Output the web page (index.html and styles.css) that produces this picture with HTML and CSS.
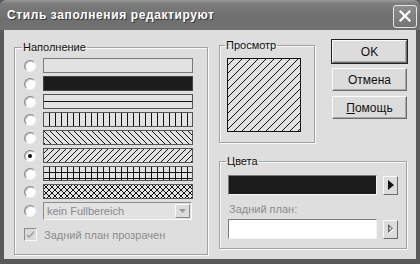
FILE: index.html
```html
<!DOCTYPE html>
<html lang="ru">
<head>
<meta charset="utf-8">
<link rel="stylesheet" href="styles.css">
</head>
<body>
<svg class="defs" width="0" height="0" aria-hidden="true">
  <defs>
    <pattern id="p-horz" width="8" height="7" patternUnits="userSpaceOnUse">
      <rect x="0" y="0" width="8" height="1" fill="#111"/>
    </pattern>
    <pattern id="p-vert" width="6" height="8" patternUnits="userSpaceOnUse">
      <rect x="0" y="0" width="1" height="8" fill="#111"/>
    </pattern>
    <pattern id="p-bdiag" width="6" height="6" patternUnits="userSpaceOnUse">
      <path d="M0 0h1v1H0zM1 1h1v1H1zM2 2h1v1H2zM3 3h1v1H3zM4 4h1v1H4zM5 5h1v1H5z" fill="#111"/>
    </pattern>
    <pattern id="p-fdiag" width="6" height="6" patternUnits="userSpaceOnUse">
      <path d="M5 0h1v1H5zM4 1h1v1H4zM3 2h1v1H3zM2 3h1v1H2zM1 4h1v1H1zM0 5h1v1H0z" fill="#111"/>
    </pattern>
    <pattern id="p-big" width="8" height="8" patternUnits="userSpaceOnUse">
      <path d="M7 0h1v1H7zM6 1h1v1H6zM5 2h1v1H5zM4 3h1v1H4zM3 4h1v1H3zM2 5h1v1H2zM1 6h1v1H1zM0 7h1v1H0z" fill="#111"/>
    </pattern>
    <pattern id="p-cross" width="6" height="6" patternUnits="userSpaceOnUse">
      <rect x="0" y="0" width="6" height="1" fill="#111"/>
      <rect x="0" y="0" width="1" height="6" fill="#111"/>
    </pattern>
    <pattern id="p-dcross" width="6" height="6" patternUnits="userSpaceOnUse">
      <path d="M0 0h1v1H0zM1 1h1v1H1zM2 2h1v1H2zM3 3h1v1H3zM4 4h1v1H4zM5 5h1v1H5zM5 0h1v1H5zM4 1h1v1H4zM3 2h1v1H3zM2 3h1v1H2zM1 4h1v1H1zM0 5h1v1H0z" fill="#111"/>
    </pattern>
  </defs>
</svg>

<div class="window">
  <div class="titlebar">
    <span class="title">Стиль заполнения редактируют</span>
    <span class="close">
      <svg width="22" height="21" viewBox="0 0 22 21">
        <path d="M6.5 5.5l9 9M15.5 5.5l-9 9" stroke="#fff" stroke-width="2.2" stroke-linecap="square"/>
      </svg>
    </span>
  </div>

  <div class="client">
    <fieldset class="group fill">
      <legend>Наполнение</legend>
      <div class="row"><span class="radio"></span><svg class="swatch" width="150" height="15"><rect x="0.5" y="0.5" width="149" height="14" fill="#e2e2e2" stroke="#7a7a7a"/></svg></div>
      <div class="row"><span class="radio"></span><svg class="swatch" width="150" height="15"><rect x="0.5" y="0.5" width="149" height="14" fill="#1c1c1c" stroke="#444"/></svg></div>
      <div class="row"><span class="radio"></span><svg class="swatch" width="150" height="15"><rect x="0.5" y="0.5" width="149" height="14" fill="#e2e2e2"/><rect x="0" y="0" width="150" height="15" fill="url(#p-horz)"/><rect x="0.5" y="0.5" width="149" height="14" fill="none" stroke="#555"/></svg></div>
      <div class="row"><span class="radio"></span><svg class="swatch" width="150" height="15"><rect x="0.5" y="0.5" width="149" height="14" fill="#e2e2e2"/><rect x="0" y="0" width="150" height="15" fill="url(#p-vert)"/><rect x="0.5" y="0.5" width="149" height="14" fill="none" stroke="#555"/></svg></div>
      <div class="row"><span class="radio"></span><svg class="swatch" width="150" height="15"><rect x="0.5" y="0.5" width="149" height="14" fill="#e2e2e2"/><rect x="0" y="0" width="150" height="15" fill="url(#p-bdiag)"/><rect x="0.5" y="0.5" width="149" height="14" fill="none" stroke="#555"/></svg></div>
      <div class="row"><span class="radio checked"></span><svg class="swatch" width="150" height="15"><rect x="0.5" y="0.5" width="149" height="14" fill="#e2e2e2"/><rect x="0" y="0" width="150" height="15" fill="url(#p-fdiag)"/><rect x="0.5" y="0.5" width="149" height="14" fill="none" stroke="#555"/></svg></div>
      <div class="row"><span class="radio"></span><svg class="swatch" width="150" height="15"><rect x="0.5" y="0.5" width="149" height="14" fill="#e2e2e2"/><rect x="0" y="0" width="150" height="15" fill="url(#p-cross)"/><rect x="0.5" y="0.5" width="149" height="14" fill="none" stroke="#555"/></svg></div>
      <div class="row"><span class="radio"></span><svg class="swatch" width="150" height="15"><rect x="0.5" y="0.5" width="149" height="14" fill="#e2e2e2"/><rect x="0" y="0" width="150" height="15" fill="url(#p-dcross)"/><rect x="0.5" y="0.5" width="149" height="14" fill="none" stroke="#555"/></svg></div>
      <div class="row combo-row">
        <span class="radio"></span>
        <div class="combo">
          <span class="combo-text">kein Fullbereich</span>
          <span class="combo-btn">
            <svg width="7" height="4" viewBox="0 0 7 4"><path d="M0 0h7L3.5 4z" fill="#9a9a9a"/></svg>
          </span>
        </div>
      </div>
      <div class="check-row">
        <span class="checkbox">
          <svg width="11" height="11" viewBox="0 0 11 11"><path d="M2 5l2 2 5-5v2l-5 5-2-2z" fill="#9a9a9a"/></svg>
        </span>
        <span class="muted">Задний план прозрачен</span>
      </div>
    </fieldset>

    <div class="side">
      <div class="side-top">
        <fieldset class="group preview">
          <legend>Просмотр</legend>
          <svg class="preview-box" width="74" height="74"><rect x="0.5" y="0.5" width="73" height="73" fill="#e2e2e2"/><rect x="0" y="0" width="74" height="74" fill="url(#p-big)"/><rect x="0.5" y="0.5" width="73" height="73" fill="none" stroke="#111"/></svg>
        </fieldset>
        <div class="buttons">
          <span class="btn default">OK</span>
          <span class="btn">Отмена</span>
          <span class="btn"><u>П</u>омощь</span>
        </div>
      </div>

      <fieldset class="group colors">
        <legend>Цвета</legend>
        <div class="color-row">
          <span class="well black"></span>
          <span class="arrow-btn">
            <svg width="6" height="10" viewBox="0 0 6 10"><path d="M0 0l6 5-6 5z" fill="#111"/></svg>
          </span>
        </div>
        <div class="muted bg-label">Задний план:</div>
        <div class="color-row">
          <span class="well white"></span>
          <span class="arrow-btn">
            <svg width="8" height="11" viewBox="0 0 8 11"><path d="M2 1l5 4.5-5 4.5z" fill="#fff"/><path d="M1 0l5 4.5L1 9z" fill="#5e5e5e"/><path d="M2.5 2.5l2 2-2 2z" fill="#fff"/></svg>
          </span>
        </div>
      </fieldset>
    </div>
  </div>
</div>
</body>
</html>
```

FILE: styles.css
```css
body {
    margin: 0;
    font: 11px "Liberation Sans", Arial, sans-serif;
    color: #111;
}

.defs {
    position: absolute;
}

.window {
    width: 420px;
    height: 264px;
    background: #5a5a5a;
    display: flex;
    flex-direction: column;
}

.titlebar {
    height: 30px;
    flex: none;
    display: flex;
    align-items: center;
    padding: 0 3px 0 7px;
    background: linear-gradient(#9a9a9a, #7c7c7c 12%, #6e6e6e 60%, #727272);
    border-radius: 6px 6px 0 0;
}

.title {
    color: #fff;
    font-weight: bold;
    font-size: 12px;
    letter-spacing: 0.6px;
    text-shadow: 1px 1px 0 #3a3a3a;
    flex: 1;
}

.close {
    width: 22px;
    height: 21px;
    margin-top: 2px;
    border: 1px solid #e6e6e6;
    border-radius: 3px;
    background: linear-gradient(#8e8e8e, #747474);
    display: flex;
}

.client {
    flex: 1;
    margin: 0 4px 5px;
    background: #dedede;
    display: flex;
    gap: 11px;
    padding: 8px 0 0 10px;
}

.group {
    margin: 0;
    border: 1px solid #a2a2a2;
    box-shadow: inset 1px 1px 0 #fafafa, 1px 1px 0 #fafafa;
    min-width: 0;
    box-sizing: border-box;
}

.group legend {
    padding: 0 1px;
    margin-left: -2px;
    line-height: 14px;
}

.fill {
    width: 194px;
    height: 215px;
    margin-top: 2px;
    padding: 4px 0 0 9px;
}

.row {
    display: flex;
    align-items: center;
    gap: 7px;
    height: 15px;
    margin-bottom: 3px;
}

.swatch {
    display: block;
    shape-rendering: crispEdges;
}

.radio {
    width: 10px;
    height: 10px;
    border-radius: 50%;
    background: #fff;
    border: 1px solid;
    border-color: #8a8a8a #f4f4f4 #f4f4f4 #8a8a8a;
    box-shadow: inset 1px 1px 0 #c4c4c4;
    display: flex;
    align-items: center;
    justify-content: center;
}

.radio.checked::after {
    content: "";
    width: 4px;
    height: 4px;
    border-radius: 50%;
    background: #111;
}

.combo-row {
    height: 18px;
    margin-top: 1px;
}

.combo {
    width: 149px;
    height: 18px;
    box-sizing: border-box;
    border: 1px solid;
    border-color: #8c8c8c #fafafa #fafafa #8c8c8c;
    background: #e2e2e2;
    display: flex;
    align-items: center;
    padding: 1px 1px 1px 3px;
}

.combo-text {
    flex: 1;
    color: #8a8a8a;
}

.combo-btn {
    width: 15px;
    height: 14px;
    box-sizing: border-box;
    border: 1px solid;
    border-color: #f8f8f8 #8a8a8a #8a8a8a #f8f8f8;
    background: #dcdcdc;
    display: flex;
    align-items: center;
    justify-content: center;
}

.check-row {
    display: flex;
    align-items: center;
    gap: 7px;
    margin-top: 8px;
}

.checkbox {
    width: 13px;
    height: 13px;
    box-sizing: border-box;
    border: 1px solid;
    border-color: #8c8c8c #fafafa #fafafa #8c8c8c;
    background: #dadada;
    display: flex;
    align-items: center;
    justify-content: center;
}

.muted {
    color: #8c8c8c;
}

.side {
    width: 188px;
    display: flex;
    flex-direction: column;
}

.side-top {
    display: flex;
    justify-content: space-between;
    align-items: flex-start;
}

.preview {
    width: 96px;
    height: 105px;
    padding: 6px 0 0 7px;
}

.preview-box {
    display: block;
    shape-rendering: crispEdges;
}

.buttons {
    width: 75px;
    margin-top: 2px;
    display: flex;
    flex-direction: column;
    gap: 5px;
}

.btn {
    height: 23px;
    box-sizing: border-box;
    border: 1px solid;
    border-color: #fafafa #6c6c6c #6c6c6c #fafafa;
    box-shadow: inset -1px -1px 0 #a8a8a8;
    background: #dcdcdc;
    display: flex;
    align-items: center;
    justify-content: center;
    font-size: 12px;
}

.btn.default {
    outline: 1px solid #222;
    outline-offset: 0;
}

.colors {
    width: 188px;
    height: 95px;
    margin-top: 11px;
    padding: 7px 0 0 8px;
}

.color-row {
    display: flex;
    align-items: center;
    gap: 6px;
}

.well {
    width: 149px;
    height: 20px;
    box-sizing: border-box;
    border: 1px solid;
    border-color: #7a7a7a #f4f4f4 #f4f4f4 #7a7a7a;
}

.well.black {
    background: #1c1c1c;
}

.well.white {
    background: #fff;
}

.arrow-btn {
    width: 15px;
    height: 19px;
    box-sizing: border-box;
    border: 1px solid;
    border-color: #fafafa #6c6c6c #6c6c6c #fafafa;
    background: #dcdcdc;
    display: flex;
    align-items: center;
    justify-content: center;
}

.bg-label {
    margin: 8px 0 3px 1px;
    line-height: 13px;
}
```
